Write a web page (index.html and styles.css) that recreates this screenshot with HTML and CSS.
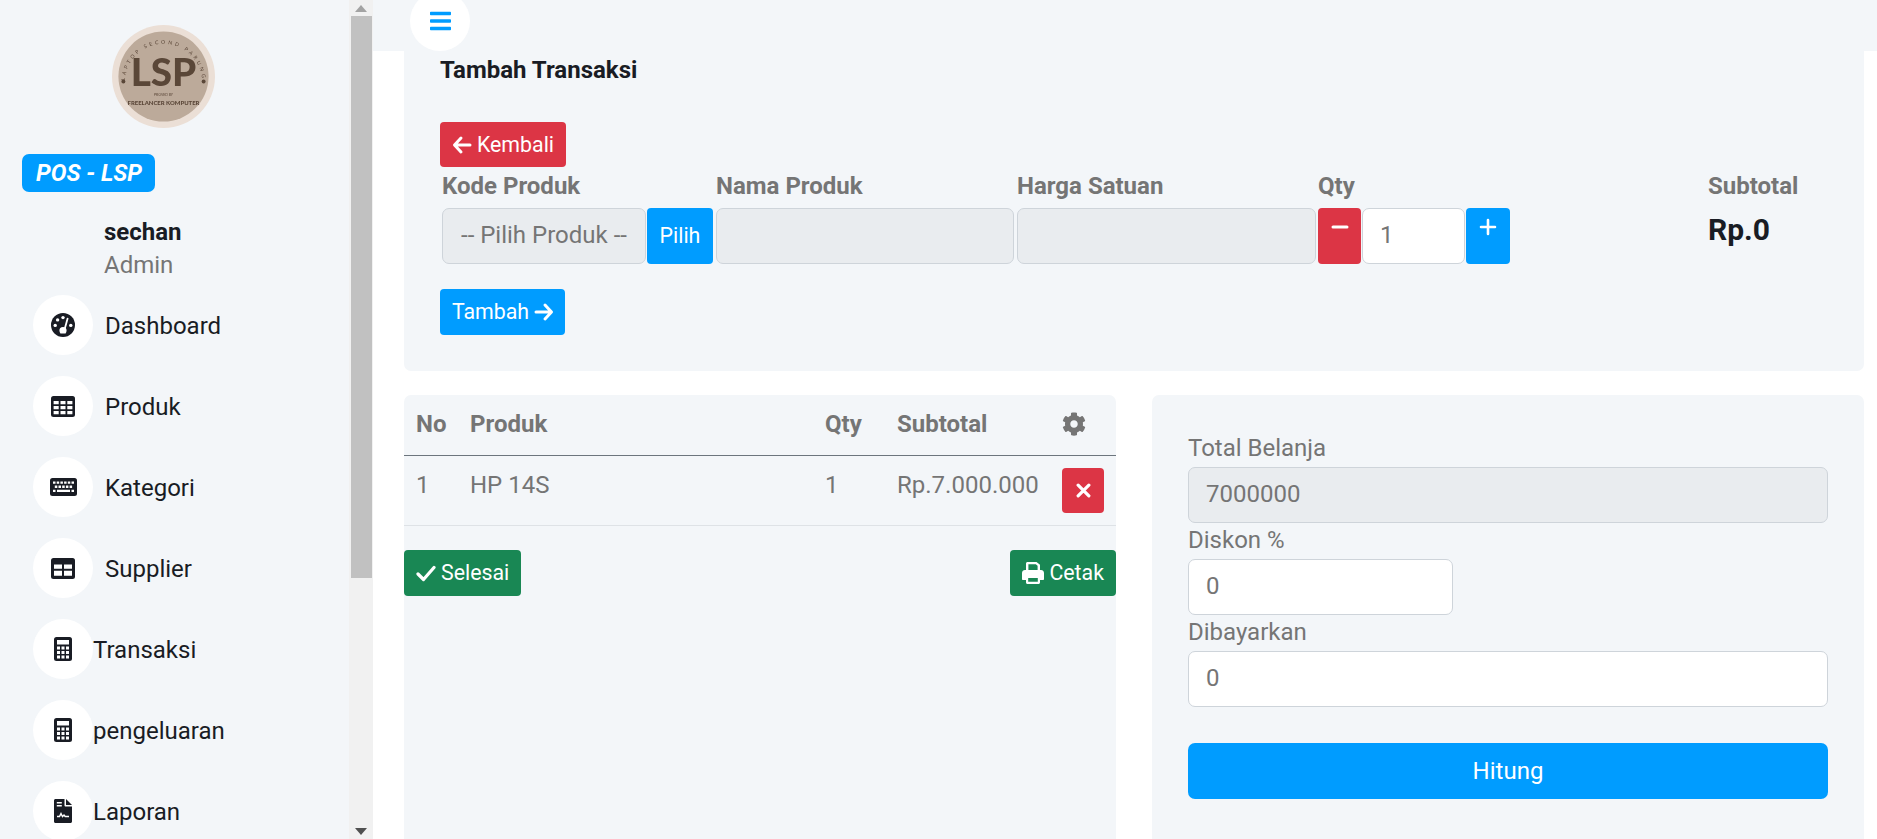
FILE: index.html
```html
<!DOCTYPE html>
<html lang="id">
<head>
<meta charset="utf-8">
<title>POS - LSP</title>
<link rel="stylesheet" href="styles.css">
</head>
<body>
<svg class="defs" width="0" height="0" aria-hidden="true">
  <symbol id="i-gauge" viewBox="0 0 24 24">
    <circle cx="12" cy="12" r="12" fill="currentColor"/>
    <circle cx="12" cy="4.6" r="1.7" fill="#fff"/>
    <circle cx="6.6" cy="6.9" r="1.7" fill="#fff"/>
    <circle cx="4.2" cy="12.4" r="1.7" fill="#fff"/>
    <circle cx="19.8" cy="12.4" r="1.7" fill="#fff"/>
    <path d="M16.6 5.6 13.9 15.2" stroke="#fff" stroke-width="1.8" stroke-linecap="round"/>
    <path d="M9.4 20.5c-.6-.8-1-1.9-1-3a3.6 3.6 0 0 1 7.2 0c0 1.1-.4 2.2-1 3z" fill="#fff"/>
  </symbol>
  <symbol id="i-table" viewBox="0 0 24 21">
    <rect width="24" height="21" rx="2.5" fill="currentColor"/>
    <path fill="#fff" d="M2.6 4.9h5.1v3.3H2.600zM9.500 4.900h5v3.300h-5zM16.300 4.900h5.100v3.300h-5.100zM2.600 9.900h5.100v3.300H2.600zM9.500 9.900h5v3.300h-5zM16.300 9.900h5.100v3.300h-5.100zM2.600 14.900h5.100v3.300H2.600zM9.500 14.900h5v3.300h-5zM16.300 14.900h5.100v3.300h-5.100z"/>
  </symbol>
  <symbol id="i-keyboard" viewBox="0 0 27 18">
    <rect width="27" height="18" rx="2.500" fill="currentColor"/>
    <path fill="#fff" d="M3 3.500h2.500v2.300H3zM6.700 3.500h2.500v2.300H6.700zM10.400 3.500h2.500v2.300h-2.500zM14.100 3.500h2.500v2.300h-2.500zM17.800 3.500h2.500v2.300h-2.500zM21.500 3.500H24v2.300h-2.500zM4.800 7.600h2.500v2.300H4.800zM8.500 7.600H11v2.300H8.500zM12.200 7.600h2.500v2.300h-2.500zM15.900 7.600h2.500v2.300h-2.500zM19.600 7.600h2.500v2.300h-2.500zM3 11.700h2.500V14H3zM7 11.700h13V14H7zM21.500 11.700H24V14h-2.500z"/>
  </symbol>
  <symbol id="i-panel" viewBox="0 0 24 21">
    <rect width="24" height="21" rx="2.500" fill="currentColor"/>
    <path fill="#fff" d="M3 6.500h8v4.200H3zM13 6.500h8v4.200h-8zM3 12.700h8v5H3zM13 12.700h8v5h-8z"/>
  </symbol>
  <symbol id="i-calc" viewBox="0 0 18 24">
    <rect width="18" height="24" rx="2.500" fill="currentColor"/>
    <path fill="#fff" d="M3 3h12v4.500H3zM3 9.500h3v3H3zM7.500 9.500h3v3h-3zM12 9.500h3v3h-3zM3 14h3v3H3zM7.500 14h3v3h-3zM12 14h3v3h-3zM3 18.500h3v3H3zM7.500 18.500h3v3h-3zM12 18.500h3v3h-3z"/>
  </symbol>
  <symbol id="i-file" viewBox="0 0 18 24">
    <path fill="currentColor" d="M10.500 0v6.400c0 .6.500 1.100 1.100 1.100H18V22.500c0 .8-.7 1.500-1.500 1.500h-15C.7 24 0 23.300 0 22.500v-21C0 .7.700 0 1.500 0z"/>
    <path fill="#191c24" d="M12 0 18 6h-6z"/>
    <path fill="#fff" d="M2.800 3h5v1.500h-5zM2.800 6h5v1.500h-5z"/>
    <path fill="none" stroke="#fff" stroke-width="1.400" d="M3 17.500h2.500l1.500-3 1.500 3 1.500-1.500 1.200 1.500H15"/>
  </symbol>
  <symbol id="i-bars" viewBox="0 0 448 512">
    <path fill="currentColor" d="M16 132h416c8.837 0 16-7.163 16-16V76c0-8.837-7.163-16-16-16H16C7.163 60 0 67.163 0 76v40c0 8.837 7.163 16 16 16zm0 160h416c8.837 0 16-7.163 16-16v-40c0-8.837-7.163-16-16-16H16c-8.837 0-16 7.163-16 16v40c0 8.837 7.163 16 16 16zm0 160h416c8.837 0 16-7.163 16-16v-40c0-8.837-7.163-16-16-16H16c-8.837 0-16 7.163-16 16v40c0 8.837 7.163 16 16 16z"/>
  </symbol>
  <symbol id="i-cog" viewBox="0 0 512 512">
    <path fill="currentColor" d="M487.400 315.700l-42.600-24.600c4.300-23.200 4.300-47 0-70.200l42.600-24.600c4.900-2.800 7.100-8.600 5.500-14-11.100-35.600-30-67.800-54.700-94.600-3.800-4.100-10-5.100-14.800-2.300L380.800 110c-17.900-15.400-38.500-27.300-60.800-35.100V25.800c0-5.600-3.900-10.500-9.400-11.700-36.700-8.200-74.300-7.800-109.200 0-5.500 1.200-9.400 6.100-9.400 11.700V75c-22.200 7.900-42.800 19.800-60.800 35.100L88.700 85.500c-4.900-2.800-11-1.900-14.800 2.300-24.700 26.700-43.600 58.900-54.700 94.600-1.700 5.400.6 11.200 5.500 14L67.300 221c-4.300 23.200-4.300 47 0 70.200l-42.600 24.600c-4.900 2.800-7.100 8.600-5.500 14 11.100 35.600 30 67.800 54.700 94.600 3.800 4.100 10 5.100 14.800 2.300l42.600-24.600c17.900 15.400 38.500 27.300 60.800 35.100v49.200c0 5.600 3.900 10.500 9.400 11.700 36.700 8.200 74.300 7.800 109.200 0 5.500-1.200 9.400-6.100 9.400-11.700v-49.200c22.200-7.900 42.800-19.800 60.800-35.100l42.600 24.600c4.900 2.800 11 1.900 14.800-2.300 24.700-26.700 43.600-58.900 54.700-94.600 1.500-5.500-.7-11.300-5.600-14.100zM256 336c-44.100 0-80-35.900-80-80s35.900-80 80-80 80 35.900 80 80-35.900 80-80 80z"/>
  </symbol>
  <symbol id="i-left" viewBox="0 0 20 20">
    <path fill="none" stroke="currentColor" stroke-width="3" stroke-linecap="round" stroke-linejoin="round" d="M9 3 2.500 10 9 17M3 10h15"/>
  </symbol>
  <symbol id="i-right" viewBox="0 0 20 20">
    <path fill="none" stroke="currentColor" stroke-width="3" stroke-linecap="round" stroke-linejoin="round" d="M11 3l6.500 7-6.500 7M17 10H2"/>
  </symbol>
  <symbol id="i-check" viewBox="0 0 20 20">
    <path fill="none" stroke="currentColor" stroke-width="3.200" stroke-linecap="round" stroke-linejoin="round" d="M2 11l5.500 5.500L18 4.500"/>
  </symbol>
  <symbol id="i-print" viewBox="0 0 22 22">
    <path fill="currentColor" d="M4 1.500C4 .7 4.700 0 5.500 0h9L18 2.800V9h-2.400V3.800L13.800 2.300H6.400V9H4z"/>
    <path fill="currentColor" fill-rule="evenodd" d="M3 8h16c1.700 0 3 1.300 3 3v6c0 .6-.4 1-1 1h-3v2.500c0 .8-.7 1.500-1.500 1.500h-11C4.700 22 4 21.300 4 20.500V18H1c-.6 0-1-.4-1-1v-6c0-1.700 1.300-3 3-3zm3.200 8v3.800h9.600V16z"/>
  </symbol>
  <symbol id="i-x" viewBox="0 0 14 14">
    <path fill="none" stroke="currentColor" stroke-width="3" stroke-linecap="round" d="M2 2l10 10M12 2 2 12"/>
  </symbol>
  <symbol id="i-minus" viewBox="0 0 18 18">
    <path fill="none" stroke="currentColor" stroke-width="3" stroke-linecap="round" d="M2 9h14"/>
  </symbol>
  <symbol id="i-plus" viewBox="0 0 18 18">
    <path fill="none" stroke="currentColor" stroke-width="2.600" stroke-linecap="round" d="M2 9h14M9 2v14"/>
  </symbol>
</svg>

<div class="app">
  <aside class="sidebar">
    <svg class="logo" viewBox="0 0 104 104" role="img" aria-label="LSP">
      <defs>
        <path id="logo-arc" d="M13 58a39 39 0 0 1 78 0"/>
        <filter id="logo-soft"><feGaussianBlur stdDeviation="0.3"/></filter>
      </defs>
      <circle cx="52" cy="52" r="52" fill="#ebdfd6"/>
      <circle cx="52" cy="52" r="45.500" fill="#bcaa9a"/>
      <g filter="url(#logo-soft)" fill="#5a4638" font-family="Lato, sans-serif">
        <text class="logo-arc-text"><textPath href="#logo-arc" startOffset="50%" text-anchor="middle">LAPTOP SECOND PARUNG</textPath></text>
        <circle cx="11.500" cy="57" r="2"/>
        <circle cx="92.500" cy="57" r="2"/>
        <text class="logo-main" x="52" y="62" text-anchor="middle">LSP</text>
        <text class="logo-tiny" x="52" y="72" text-anchor="middle">PROVED BY</text>
        <text class="logo-sub" x="52" y="81" text-anchor="middle">FREELANCER KOMPUTER</text>
      </g>
    </svg>
    <div class="brand">POS - LSP</div>
    <div class="user">
      <div class="user-name">sechan</div>
      <div class="user-role">Admin</div>
    </div>
    <nav class="menu">
      <a class="menu-item"><span class="menu-icon"><svg class="ic-24w"><use href="#i-gauge"/></svg></span><span class="menu-label">Dashboard</span></a>
      <a class="menu-item"><span class="menu-icon"><svg class="ic-24t"><use href="#i-table"/></svg></span><span class="menu-label">Produk</span></a>
      <a class="menu-item"><span class="menu-icon"><svg class="ic-27k"><use href="#i-keyboard"/></svg></span><span class="menu-label">Kategori</span></a>
      <a class="menu-item"><span class="menu-icon"><svg class="ic-24t"><use href="#i-panel"/></svg></span><span class="menu-label">Supplier</span></a>
      <a class="menu-item"><span class="menu-icon"><svg class="ic-18c"><use href="#i-calc"/></svg></span><span class="menu-label flush">Transaksi</span></a>
      <a class="menu-item"><span class="menu-icon"><svg class="ic-18c"><use href="#i-calc"/></svg></span><span class="menu-label flush">pengeluaran</span></a>
      <a class="menu-item"><span class="menu-icon"><svg class="ic-18c"><use href="#i-file"/></svg></span><span class="menu-label flush">Laporan</span></a>
    </nav>
  </aside>

  <div class="scrollbar" aria-hidden="true">
    <div class="sb-btn"><span class="sb-up"></span></div>
    <div class="sb-thumb"></div>
    <div class="sb-rest"></div>
    <div class="sb-btn"><span class="sb-down"></span></div>
  </div>

  <main class="main">
    <header class="topbar">
      <button class="toggler" type="button"><svg class="ic-bars"><use href="#i-bars"/></svg></button>
    </header>

    <section class="panel-add">
      <h6 class="title">Tambah Transaksi</h6>
      <button class="btn btn-danger btn-back" type="button"><svg class="ic-btn"><use href="#i-left"/></svg>Kembali</button>
      <div class="form-grid">
        <div class="field">
          <label class="field-label">Kode Produk</label>
          <div class="field-row">
            <input class="control code" value="-- Pilih Produk --" disabled>
            <button class="btn btn-primary btn-pick" type="button">Pilih</button>
          </div>
        </div>
        <div class="field">
          <label class="field-label">Nama Produk</label>
          <input class="control name" disabled>
        </div>
        <div class="field">
          <label class="field-label">Harga Satuan</label>
          <input class="control price" disabled>
        </div>
        <div class="field">
          <label class="field-label">Qty</label>
          <div class="qty-row">
            <button class="btn btn-danger btn-qty" type="button"><svg class="ic-qty"><use href="#i-minus"/></svg></button>
            <input class="control qty" value="1">
            <button class="btn btn-primary btn-qty" type="button"><svg class="ic-qty"><use href="#i-plus"/></svg></button>
          </div>
        </div>
        <div class="field">
          <label class="field-label">Subtotal</label>
          <div class="subtotal-value">Rp.0</div>
        </div>
      </div>
      <button class="btn btn-primary btn-add" type="button">Tambah<svg class="ic-btn after"><use href="#i-right"/></svg></button>
    </section>

    <div class="columns">
      <section class="card card-table">
        <table class="table">
          <colgroup>
            <col class="c-no"><col class="c-prod"><col class="c-qty"><col class="c-sub"><col class="c-act">
          </colgroup>
          <thead>
            <tr><th>No</th><th>Produk</th><th>Qty</th><th>Subtotal</th><th><svg class="ic-cog"><use href="#i-cog"/></svg></th></tr>
          </thead>
          <tbody>
            <tr>
              <td>1</td><td>HP 14S</td><td>1</td><td>Rp.7.000.000</td>
              <td><button class="btn btn-danger btn-del" type="button"><svg class="ic-x"><use href="#i-x"/></svg></button></td>
            </tr>
          </tbody>
        </table>
        <div class="table-actions">
          <button class="btn btn-success btn-done" type="button"><svg class="ic-btn"><use href="#i-check"/></svg>Selesai</button>
          <button class="btn btn-success btn-done" type="button"><svg class="ic-btn ic-print"><use href="#i-print"/></svg>Cetak</button>
        </div>
      </section>

      <section class="card card-pay">
        <label class="pay-label">Total Belanja</label>
        <input class="control wide" value="7000000" disabled>
        <label class="pay-label">Diskon %</label>
        <input class="control short" value="0">
        <label class="pay-label">Dibayarkan</label>
        <input class="control wide" value="0">
        <button class="btn btn-primary btn-calc" type="button">Hitung</button>
      </section>
    </div>
  </main>
</div>
</body>
</html>
```

FILE: styles.css
```css
* { box-sizing: border-box; }

html, body {
  margin: 0;
  height: 839px;
  overflow: hidden;
  background: #fff;
  color: #757575;
  font-family: Roboto, "Liberation Sans", sans-serif;
  font-size: 24px;
  line-height: 32px;
}

.defs { position: absolute; }

.app { display: flex; height: 839px; }

/* Sidebar */
.sidebar {
  flex: 0 0 349px;
  height: 839px;
  overflow: hidden;
  background: #f3f6f9;
  padding-top: 25px;
}

.logo { display: block; width: 103px; height: 103px; margin-left: 112px; }
.logo-arc-text { font-size: 5.200px; letter-spacing: 2.700px; }
.logo-main { font-size: 39px; font-weight: 900; }
.logo-tiny { font-size: 3.500px; }
.logo-sub { font-size: 6px; font-weight: 900; }

.brand {
  width: 133px;
  height: 38px;
  margin: 26px 0 24px 22px;
  padding-left: 1px;
  border-radius: 7px;
  background: #009cff;
  color: #fff;
  font-size: 23.500px;
  font-weight: 700;
  font-style: italic;
  line-height: 38px;
  text-align: center;
}

.user { margin-left: 104px; }
.user-name { font-weight: 700; color: #191c24; }
.user-role { margin-top: 1px; }

.menu { display: flex; flex-direction: column; gap: 21px; margin: 14px 0 0 33px; }
.menu-item { display: flex; align-items: center; height: 60px; color: #191c24; }
.menu-icon {
  display: flex;
  flex: 0 0 60px;
  align-items: center;
  justify-content: center;
  width: 60px;
  height: 60px;
  border-radius: 50%;
  background: #fff;
  color: #191c24;
}
.menu-label { margin-left: 12px; padding-top: 2px; }
.menu-label.flush { margin-left: 0; }

.ic-24w { width: 24px; height: 24px; }
.ic-24t { width: 24px; height: 21px; }
.ic-27k { width: 27px; height: 18px; }
.ic-18c { width: 18px; height: 24px; }

/* Sidebar scrollbar */
.scrollbar {
  display: flex;
  flex: 0 0 24px;
  flex-direction: column;
  align-items: center;
  height: 839px;
  background: #f1f1f1;
}
.sb-btn { display: flex; flex: 0 0 16px; align-items: center; justify-content: center; width: 100%; }
.sb-up { border: 6px solid transparent; border-top: 0; border-bottom: 7px solid #a3a3a3; }
.sb-down { border: 6px solid transparent; border-bottom: 0; border-top: 7px solid #505050; }
.sb-thumb { flex: 0 0 562px; width: 21px; background: #c1c1c1; }
.sb-rest { flex: 1; }

/* Main */
.main { display: flex; flex: 1; flex-direction: column; height: 839px; min-width: 0; overflow: hidden; }

.topbar { flex: 0 0 51px; height: 51px; padding-left: 37px; background: #f3f6f9; }
.toggler {
  display: flex;
  align-items: center;
  justify-content: center;
  width: 60px;
  height: 60px;
  margin-top: -9px;
  padding: 0;
  border: 0;
  border-radius: 50%;
  background: #fff;
  color: #009cff;
}
.ic-bars { width: 21px; height: 24px; }

.panel-add {
  flex: 0 0 320px;
  margin: 0 13px 0 31px;
  padding: 3px 36px 0;
  border-radius: 0 0 7px 7px;
  background: #f3f6f9;
}

.title {
  height: 32px;
  margin: 0 0 36px;
  color: #191c24;
  font-size: 24px;
  font-weight: 700;
  line-height: 32px;
}

/* Buttons */
.btn {
  display: inline-flex;
  align-items: center;
  justify-content: center;
  padding: 0;
  border: 0;
  border-radius: 4px;
  color: #fff;
  font-family: inherit;
  font-size: 21.33px;
  line-height: 32px;
}
.btn-primary { background: #009cff; }
.btn-danger { background: #dc3545; }
.btn-success { background: #198754; }

.btn-back { display: flex; width: 126px; height: 45px; }
.btn-add { display: flex; width: 125px; height: 46px; margin-top: 25px; padding-left: 1px; }
.btn-pick { flex: 0 0 66px; height: 56px; }
.btn-qty { flex: 0 0 44px; height: 56px; align-items: flex-start; padding-top: 10px; }
.btn-del { width: 42px; height: 45px; }
.btn-done { height: 46px; padding: 0 12px; }
.btn-calc { display: flex; width: 100%; height: 56px; margin-top: 36px; border-radius: 7px; font-size: 24px; }

.ic-btn { width: 20px; height: 20px; margin-right: 5px; }
.ic-btn.after { margin: 0 0 0 5px; }
.ic-print { width: 22px; height: 22px; margin-right: 5px; }
.ic-qty { width: 18px; height: 18px; }
.ic-x { width: 15px; height: 15px; }
.ic-cog { display: block; width: 24px; height: 24px; }

/* Form row */
.form-grid {
  display: grid;
  grid-template-columns: 274px 301px 301px 390px auto;
  margin-left: 2px;
}
.field-label { display: block; height: 32px; margin-bottom: 9px; padding-top: 3px; font-weight: 700; line-height: 32px; }
.field-row, .qty-row { display: flex; gap: 1px; }

.control {
  display: block;
  height: 56px;
  padding: 0 17px 2px;
  border: 1px solid #ced4da;
  border-radius: 7px;
  background: #fff;
  color: #757575;
  font-family: inherit;
  font-size: 24px;
  opacity: 1;
}
.control:disabled { background: #e9ecef; }
.code { flex: 0 0 204px; width: 204px; padding: 0 0 2px 18px; }
.name { width: 298px; }
.price { width: 299px; }
.qty-row .btn-danger { flex-basis: 43px; }
.qty { flex: 0 0 103px; width: 103px; }
.wide { width: 100%; }
.short { width: 265px; }

.subtotal-value { color: #191c24; font-size: 30px; font-weight: 700; line-height: 44px; }

/* Lower columns */
.columns {
  display: flex;
  flex: 1;
  gap: 36px;
  margin: 24px 13px 0 31px;
}
.card { flex: 0 0 712px; border-radius: 7px 7px 0 0; background: #f3f6f9; }
.card-pay { display: flex; flex-direction: column; align-items: flex-start; padding: 36px 36px 0; }
.pay-label { display: block; height: 32px; margin-bottom: 4px; padding-top: 1px; }

.table { width: 712px; border-collapse: collapse; table-layout: fixed; }
.c-no { width: 54px; }
.c-prod { width: 355px; }
.c-qty { width: 72px; }
.c-sub { width: 165px; }
.c-act { width: 66px; }
.table th {
  height: 60px;
  padding: 0 12px 2px;
  border-bottom: 1px solid #6c757d;
  font-weight: 700;
  text-align: left;
  vertical-align: middle;
}
.table td {
  height: 70px;
  padding: 13px 12px 12px;
  border-bottom: 1px solid #dee2e6;
  vertical-align: top;
  white-space: nowrap;
}
.table td:last-child { padding-top: 12px; }

.table-actions { display: flex; justify-content: space-between; margin-top: 24px; }
```
